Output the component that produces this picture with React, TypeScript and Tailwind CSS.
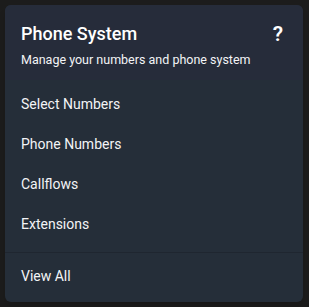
export default function App() {
  const items = ['Select Numbers', 'Phone Numbers', 'Callflows', 'Extensions'];
  return (
    <div className="w-[309px] h-[307px] bg-[#1c1c1c] p-[5px] pr-[6px] pb-[5px] font-['Roboto',sans-serif]">
      <div className="flex h-full flex-col overflow-hidden rounded-md bg-[#252e39] shadow-lg">
        <div className="flex h-[75px] items-start justify-between bg-[#262c3a] pl-4 pr-5 pt-[17px]">
          <div>
            <h3 className="text-[18px] leading-6 font-medium text-white">Phone System</h3>
            <p className="mt-[6px] text-[12.5px] leading-4 text-gray-100">
              Manage your numbers and phone system
            </p>
          </div>
          <span className="text-[21px] leading-6 font-semibold text-white">?</span>
        </div>
        <ul className="pt-1 pb-2">
          {items.map((item) => (
            <li key={item} className="flex h-10 items-center pl-4 text-[14px] text-gray-100">
              {item}
            </li>
          ))}
        </ul>
        <div className="border-t border-[#1f2630] flex h-12 items-center pl-4 text-[14px] text-gray-100">
          View All
        </div>
      </div>
    </div>
  );
}
